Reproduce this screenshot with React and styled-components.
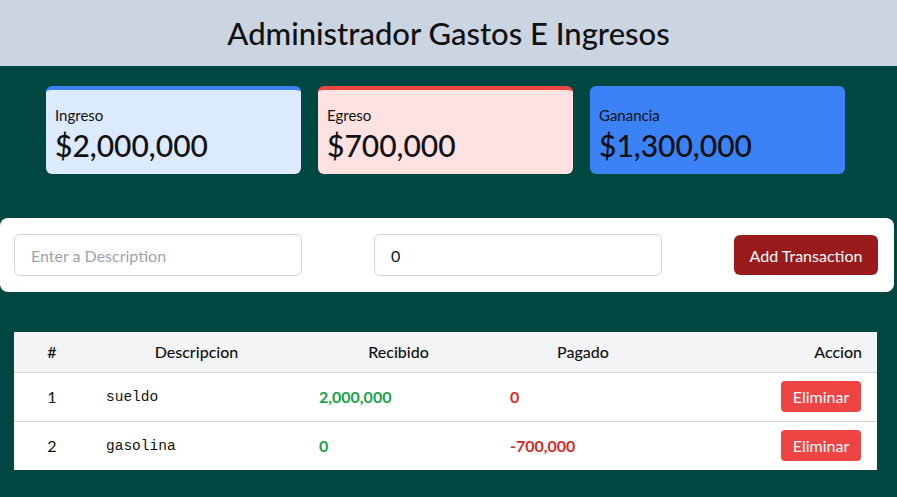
import React from "react";
import styled, { createGlobalStyle } from "styled-components";

const Global = createGlobalStyle`
  html, body { margin: 0; padding: 0; }
  body {
    background: #004741;
    font-family: Lato, "Noto Sans", "Liberation Sans", sans-serif;
    color: #111;
    min-height: 497px;
  }
  * { box-sizing: border-box; }
`;

const Header = styled.header`
  background: #cbd5e1;
  height: 66px;
  display: flex;
  align-items: center;
  justify-content: center;
`;

const Title = styled.h1`
  margin: 0;
  font-size: 31px;
  font-weight: 500;
  line-height: 36px;
  color: #111;
`;

const Main = styled.main`
  display: flex;
  flex-direction: column;
  padding-top: 20px;
`;

const Cards = styled.div`
  display: flex;
  gap: 17px;
  padding-left: 46px;
`;

const Card = styled.div`
  width: 255px;
  height: 88px;
  border-radius: 6px;
  border-top: 4px solid ${(p) => p.$accent};
  background: ${(p) => p.$bg};
  padding: 13px 9px 9px;
  display: flex;
  flex-direction: column;
`;

const CardLabel = styled.div`
  font-size: 15px;
  line-height: 24px;
`;

const CardAmount = styled.div`
  font-size: 30px;
  line-height: 36px;
  font-weight: 500;
`;

const Form = styled.form`
  margin-top: 44px;
  margin-right: 3px;
  background: #fff;
  border-radius: 8px;
  height: 74px;
  display: flex;
  align-items: center;
  justify-content: space-between;
  padding: 0 16px 0 14px;
`;

const Input = styled.input`
  width: 288px;
  height: 42px;
  border: 1px solid #d1d5db;
  border-radius: 6px;
  padding: 0 16px;
  font-family: inherit;
  font-size: 16px;
  color: #111;
  outline: none;
  &::placeholder { color: #9ca3af; }
`;

const AddButton = styled.button`
  width: 144px;
  height: 40px;
  border: none;
  border-radius: 6px;
  background: #991b1b;
  color: #fff;
  font-family: inherit;
  font-size: 16px;
  cursor: pointer;
`;

const TableWrap = styled.div`
  margin: 40px 20px 0 14px;
  background: #fff;
`;

const Table = styled.table`
  width: 863px;
  border-collapse: collapse;
  table-layout: fixed;
`;

const Th = styled.th`
  background: #f3f4f6;
  height: 40px;
  font-weight: 500;
  font-size: 16px;
  text-align: ${(p) => p.$align || "center"};
  padding: 0 15px;
  border-bottom: 1px solid #d1d5db;
`;

const Tr = styled.tr`
  height: 49px;
  & + & td { border-top: 1px solid #d1d5db; }
`;

const Td = styled.td`
  font-size: 16px;
  padding: 0 16px;
  text-align: ${(p) => p.$align || "left"};
  color: ${(p) => p.$color || "#111"};
  font-weight: ${(p) => (p.$bold ? 700 : 400)};
  font-family: ${(p) => (p.$mono ? '"Liberation Mono", "DejaVu Sans Mono", monospace' : "inherit")};
  ${(p) => (p.$mono ? "font-size: 14.5px;" : "")}
`;

const DeleteButton = styled.button`
  width: 80px;
  height: 31px;
  border: none;
  border-radius: 4px;
  background: #ef4444;
  color: #fff;
  font-family: inherit;
  font-size: 16px;
  cursor: pointer;
`;

const rows = [
  { id: 1, desc: "sueldo", rec: "2,000,000", pag: "0" },
  { id: 2, desc: "gasolina", rec: "0", pag: "-700,000" },
];

export default function App() {
  return (
    <>
      <Global />
      <Header>
        <Title>Administrador Gastos E Ingresos</Title>
      </Header>
      <Main>
        <Cards>
          <Card $accent="#3b82f6" $bg="#dbeafe">
            <CardLabel>Ingreso</CardLabel>
            <CardAmount>$2,000,000</CardAmount>
          </Card>
          <Card $accent="#ef4444" $bg="#fee2e2">
            <CardLabel>Egreso</CardLabel>
            <CardAmount>$700,000</CardAmount>
          </Card>
          <Card $accent="#3b82f6" $bg="#3b82f6">
            <CardLabel>Ganancia</CardLabel>
            <CardAmount>$1,300,000</CardAmount>
          </Card>
        </Cards>
        <Form onSubmit={(e) => e.preventDefault()}>
          <Input placeholder="Enter a Description" />
          <Input defaultValue="0" />
          <AddButton type="submit">Add Transaction</AddButton>
        </Form>
        <TableWrap>
          <Table>
            <colgroup>
              <col style={{ width: 76 }} />
              <col style={{ width: 213 }} />
              <col style={{ width: 191 }} />
              <col style={{ width: 178 }} />
              <col />
            </colgroup>
            <thead>
              <tr>
                <Th>#</Th>
                <Th>Descripcion</Th>
                <Th>Recibido</Th>
                <Th>Pagado</Th>
                <Th $align="right">Accion</Th>
              </tr>
            </thead>
            <tbody>
              {rows.map((r) => (
                <Tr key={r.id}>
                  <Td $align="center">{r.id}</Td>
                  <Td $mono>{r.desc}</Td>
                  <Td $bold $color="#16a34a">{r.rec}</Td>
                  <Td $bold $color="#dc2626">{r.pag}</Td>
                  <Td $align="right">
                    <DeleteButton type="button">Eliminar</DeleteButton>
                  </Td>
                </Tr>
              ))}
            </tbody>
          </Table>
        </TableWrap>
      </Main>
    </>
  );
}
